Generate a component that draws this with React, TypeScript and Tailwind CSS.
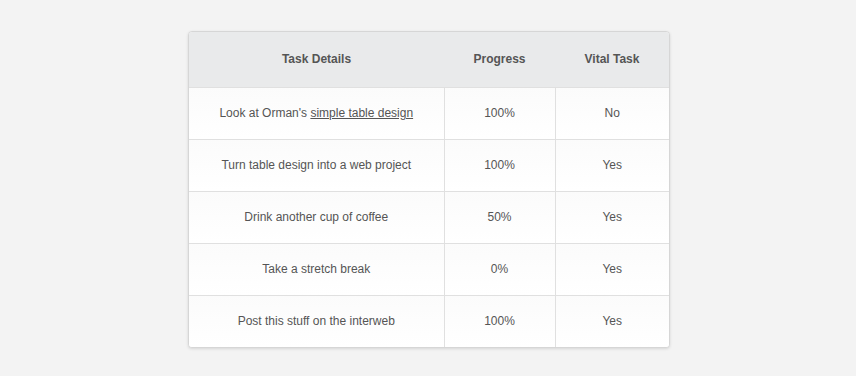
import React from "react";

const rows: [React.ReactNode, string, string][] = [
  [
    <>
      Look at Orman's <a href="#" className="underline text-[#555]">simple table design</a>
    </>,
    "100%",
    "No",
  ],
  ["Turn table design into a web project", "100%", "Yes"],
  ["Drink another cup of coffee", "50%", "Yes"],
  ["Take a stretch break", "0%", "Yes"],
  ["Post this stuff on the interweb", "100%", "Yes"],
];

export default function App() {
  return (
    <div
      className="w-[856px] h-[376px] bg-[#f3f3f3] flex justify-center pt-[31px] pl-[2px]"
      style={{ fontFamily: '"Liberation Sans", Arial, sans-serif' }}
    >
      <div className="w-[482px] rounded-[4px] border border-[#d6d6d6] bg-white shadow-[0_1px_3px_rgba(0,0,0,0.12)] overflow-hidden self-start">
        <table className="w-full border-collapse text-[12px] text-[#555]">
          <thead>
            <tr className="h-[55px] bg-[#e9eaeb]">
              <th className="w-[255px] font-bold text-center border-b border-[#e0e0e0]">Task Details</th>
              <th className="w-[111px] font-bold text-center border-b border-[#e0e0e0]">Progress</th>
              <th className="font-bold text-center border-b border-[#e0e0e0]">Vital Task</th>
            </tr>
          </thead>
          <tbody>
            {rows.map((r, i) => (
              <tr key={i} className="h-[52px] bg-gradient-to-b from-[#fbfbfb] to-white">
                <td className={`text-center ${i < 4 ? "border-b border-[#e0e0e0]" : ""}`}>{r[0]}</td>
                <td className={`text-center border-l border-[#e0e0e0] ${i < 4 ? "border-b" : ""}`}>{r[1]}</td>
                <td className={`text-center border-l border-[#e0e0e0] ${i < 4 ? "border-b" : ""}`}>{r[2]}</td>
              </tr>
            ))}
          </tbody>
        </table>
      </div>
    </div>
  );
}
